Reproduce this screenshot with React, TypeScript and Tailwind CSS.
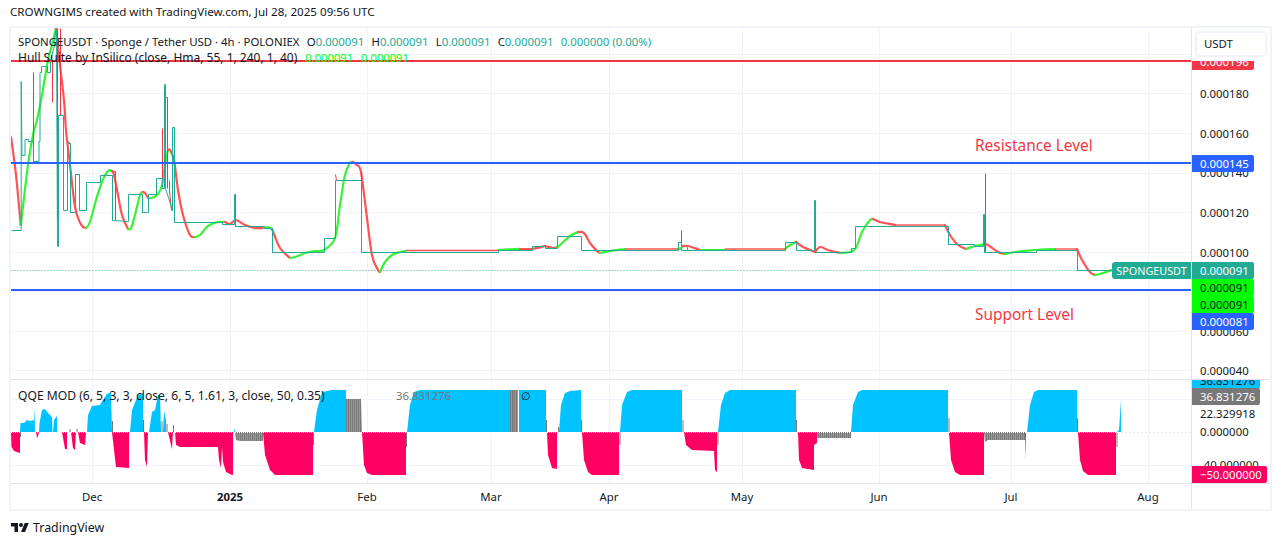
type Pt = [number, number]

const vGrid = [92, 230, 367, 491, 609, 742, 879, 1011, 1148]
const hGrid = [54, 93, 133, 173, 212, 252, 291, 331, 370]
const qGrid = [399, 465]

const TEAL = "#22ab94"
const RED = "#f23645"
const BLUE = "#2962ff"

// price steps, in page coordinates
const teal: Pt[] = [
  [11, 230], [20.7, 230], [20.7, 81], [21.5, 155], [24.5, 155], [24.5, 139], [28, 139], [28, 141], [33, 141], [33, 161],
  [38.5, 161], [38.5, 141], [39.5, 141], [39.5, 72], [41, 72], [41, 66], [47, 66], [47, 72], [50, 72], [50, 60], [54, 45], [55, 30], [56, 30],
  [57, 246], [58, 246], [58, 115], [63, 115], [63, 210], [67, 210], [67, 143], [70, 143], [70, 212], [75, 212], [75, 174], [79, 174], [79, 210],
  [86, 210], [86, 182], [100, 182], [100, 175], [112, 175], [112, 220], [128, 221], [128, 194], [142, 194], [142, 212], [148, 212],
  [148, 194], [156, 194], [156, 178], [162, 178], [162, 188], [164, 188], [164, 84], [165, 84], [165, 188], [172, 210], [172, 127], [174, 127],
  [174, 222], [222, 222], [222, 224], [234, 224], [234, 194], [235, 194], [235, 226], [264, 226], [264, 228], [272, 228], [272, 252],
  [324, 252], [324, 238], [335, 238], [335, 180], [361, 180], [361, 252], [498, 252], [498, 250], [532, 250], [532, 246], [545, 246],
  [545, 248], [557, 248], [557, 236], [581, 236], [581, 250], [678, 250], [678, 242], [681, 242], [681, 250], [687, 250], [687, 247], [687, 250],
  [785, 250], [785, 242], [796, 242], [796, 250], [814, 250], [814, 200], [815, 200], [815, 252], [851, 252], [851, 248], [855, 248], [855, 226],
  [948, 226], [948, 244], [974, 244], [974, 246], [983, 246], [983, 214], [984, 214], [984, 252], [1036, 252], [1036, 250],
  [1077, 250], [1077, 270], [1112, 270],
]

const redSteps: Pt[][] = [
  [[33, 72], [33, 161]],
  [[52, 60], [52, 102]],
  [[57, 28], [57, 220]],
  [[60, 28], [60, 115]],
  [[67, 141], [70, 143], [70, 212]],
  [[75, 212], [75, 174], [79, 174], [79, 210]],
  [[112, 171], [115, 171], [115, 220]],
  [[142, 194], [142, 212]],
  [[162, 188], [162, 128]],
  [[165, 97], [167, 97], [167, 188]],
  [[169, 180], [169, 190], [171, 210]],
  [[174, 127], [174, 222]],
  [[235, 194], [235, 226]],
  [[272, 228], [272, 252]],
  [[335, 174], [336, 180]],
  [[361, 172], [361, 252]],
  [[581, 236], [581, 250]],
  [[681, 230], [681, 250]],
  [[796, 242], [796, 250]],
  [[815, 200], [815, 252]],
  [[948, 226], [948, 244]],
  [[985, 173], [985, 252]],
  [[1077, 250], [1077, 270]],
]

const hull: { c: "g" | "r"; pts: Pt[] }[] = [
  { c: "r", pts: [[11, 137], [16, 175], [20.7, 225]] },
  { c: "g", pts: [[20.7, 225], [22, 215], [28, 165], [33, 135], [37, 120], [42, 95], [48, 60], [52, 45], [56, 28]] },
  { c: "r", pts: [[56, 28], [60, 65], [64, 100], [66, 130], [70, 165], [74, 200], [77, 215], [82, 226], [86, 228]] },
  { c: "g", pts: [[86, 228], [90, 222], [96, 200], [102, 182], [108, 171], [112, 171]] },
  { c: "r", pts: [[112, 171], [114, 175], [118, 195], [122, 215], [128, 229]] },
  { c: "g", pts: [[128, 229], [131, 228], [135, 215], [140, 195], [143, 192]] },
  { c: "r", pts: [[143, 192], [145, 193], [148, 198]] },
  { c: "g", pts: [[148, 198], [152, 198], [158, 194], [162, 185], [165, 165], [168, 150]] },
  { c: "r", pts: [[168, 150], [170, 150], [174, 160], [178, 190], [183, 215], [190, 235], [195, 237]] },
  { c: "g", pts: [[195, 237], [200, 235], [208, 226], [218, 222], [225, 222]] },
  { c: "r", pts: [[225, 222], [230, 224], [236, 220], [245, 225], [255, 228], [264, 228]] },
  { c: "g", pts: [[264, 228], [268, 227], [272, 229]] },
  { c: "r", pts: [[272, 229], [280, 248], [290, 258]] },
  { c: "g", pts: [[290, 258], [295, 257], [305, 253], [315, 251], [324, 250], [335, 238], [340, 205], [345, 175], [350, 163], [353, 162]] },
  { c: "r", pts: [[353, 162], [357, 165], [361, 172], [366, 210], [372, 255], [378, 270], [380, 272]] },
  { c: "g", pts: [[380, 272], [385, 262], [392, 255], [400, 252], [406, 251]] },
  { c: "g", pts: [[498, 250], [515, 249], [520, 249]] },
  { c: "r", pts: [[520, 249], [532, 249], [545, 246]] },
  { c: "r", pts: [[545, 246], [553, 248], [557, 247]] },
  { c: "g", pts: [[557, 247], [560, 245], [570, 236], [578, 232]] },
  { c: "r", pts: [[578, 232], [584, 233], [590, 243], [597, 251], [600, 253]] },
  { c: "g", pts: [[600, 253], [610, 251], [625, 249]] },
  { c: "g", pts: [[678, 249], [680, 249], [683, 246]] },
  { c: "r", pts: [[683, 246], [688, 246], [700, 250]] },
  { c: "g", pts: [[700, 250], [720, 250], [725, 250]] },
  { c: "g", pts: [[785, 249], [790, 245], [796, 242]] },
  { c: "r", pts: [[796, 242], [803, 247], [815, 252]] },
  { c: "r", pts: [[815, 252], [820, 247], [828, 250], [840, 253]] },
  { c: "g", pts: [[840, 253], [850, 252], [856, 248], [862, 232], [870, 220], [873, 219]] },
  { c: "r", pts: [[873, 219], [880, 222], [895, 225]] },
  { c: "r", pts: [[945, 225], [950, 235], [958, 245], [966, 249]] },
  { c: "g", pts: [[966, 249], [975, 246], [985, 244]] },
  { c: "r", pts: [[985, 244], [988, 245], [998, 252], [1005, 254]] },
  { c: "g", pts: [[1005, 254], [1015, 252], [1035, 250], [1055, 249]] },
  { c: "r", pts: [[1077, 249], [1082, 260], [1090, 272], [1095, 275]] },
  { c: "g", pts: [[1095, 275], [1100, 274], [1112, 270]] },
]

// flat stretches of the hull line, where only a thin red edge shows above the price
const hullFlat: [number, number, number][] = [
  [406, 498, 250.5], [625, 678, 249], [725, 785, 249], [895, 945, 225], [1055, 1077, 249],
]

const qBlue: Pt[][] = [
  [[20, 432], [20.5, 423], [24, 423], [27, 420], [30, 421], [34, 420], [34.5, 407], [35, 432]],
  [[39, 432], [39.5, 423], [42, 410], [45, 409], [48, 413], [52, 417], [52.5, 432]],
  [[53, 432], [54, 420], [57, 416], [57, 432]],
  [[87, 432], [88, 415], [92, 406], [100, 405], [103, 400], [107, 394], [111, 392], [112, 432]],
  [[130, 432], [132, 410], [138, 395], [143, 393], [143, 432]],
  [[149, 432], [152, 412], [155, 410], [158, 395], [160, 395], [161, 432]],
  [[163, 432], [164, 411], [166, 420], [166, 432]],
  [[234, 432], [234.5, 428], [235, 432]],
  [[314, 432], [317, 410], [322, 392], [332, 390], [346, 390], [346, 432]],
  [[407, 432], [410, 405], [414, 392], [420, 390], [510, 390], [510, 432]],
  [[519, 432], [519, 390], [527, 390], [546, 390], [546, 432]],
  [[559, 432], [561, 405], [565, 393], [570, 391], [581, 390], [581, 432]],
  [[620, 432], [622, 405], [627, 392], [632, 390], [682, 390], [682, 432]],
  [[718, 432], [721, 405], [725, 393], [730, 390], [796, 390], [796, 432]],
  [[851, 432], [853, 405], [858, 392], [862, 390], [948, 390], [948, 432]],
  [[1027, 432], [1030, 405], [1034, 392], [1038, 390], [1077, 390], [1077, 432]],
  [[1117, 432], [1119, 430], [1120, 415], [1121, 400], [1121, 432]],
]

const qPink: Pt[][] = [
  [[11, 432], [11.5, 447], [14, 451], [20, 453], [20, 432]],
  [[36, 432], [37, 438], [38, 436], [39, 432]],
  [[62, 432], [65, 449], [67, 449], [67, 432]],
  [[71, 432], [73, 448], [75, 450], [76, 432]],
  [[78, 432], [80, 443], [85, 445], [86, 432]],
  [[112, 432], [114, 450], [116, 467], [129, 468], [129, 432]],
  [[144, 432], [145, 460], [147, 467], [148, 432]],
  [[168, 432], [171, 445], [172, 449], [173, 432]],
  [[175, 432], [176, 445], [180, 447], [218, 447], [219, 460], [221, 468], [222, 447], [223, 462], [226, 472], [232, 475], [233, 475], [233, 432]],
  [[263, 432], [265, 455], [270, 470], [275, 475], [313, 475], [313, 432]],
  [[362, 432], [364, 465], [367, 473], [372, 475], [406, 475], [406, 432]],
  [[547, 432], [548, 455], [552, 468], [557, 469], [557, 432]],
  [[582, 432], [584, 460], [588, 472], [592, 475], [619, 475], [619, 432]],
  [[684, 432], [686, 445], [692, 450], [714, 451], [715, 470], [717, 472], [717, 432]],
  [[798, 432], [799, 460], [802, 468], [814, 470], [814, 445], [817, 443], [817, 432]],
  [[949, 432], [951, 460], [955, 472], [960, 475], [984, 475], [984, 432]],
  [[1025, 432], [1025.5, 460], [1026, 432]],
  [[1078, 432], [1080, 460], [1083, 471], [1088, 475], [1116, 475], [1116, 432]],
]

const qGray: Pt[][] = [
  [[235, 432], [236, 440], [240, 441], [263, 441], [263, 432]],
  [[346, 399], [361, 399], [362, 432], [346, 432]],
  [[510, 390], [518, 390], [518, 432], [510, 432]],
  [[817, 432], [817, 438], [851, 438], [851, 432]],
  [[984, 432], [985, 442], [988, 440], [1025, 440], [1025, 432]],
]

// single thin grey bars: x, top, bottom
const qTicks: [number, number, number][] = [
  [20.5, 432, 437], [70, 429, 432], [77, 429, 432], [112.5, 421, 432], [143.5, 420, 432], [162, 421, 432], [167, 424, 432],
  [173.5, 425, 432], [313.5, 432, 445], [406.5, 432, 447], [546.5, 420, 432], [558.5, 427, 432], [581.5, 420, 432], [620, 432, 445],
  [683, 420, 432], [718, 432, 445], [796.5, 420, 432], [949, 418, 432], [1077.5, 418, 432], [1117, 432, 447],
]

const toPoints = (pts: Pt[]) => pts.map((p) => p.join(",")).join(" ")

// catmull-rom through the points so the hull line stays round
function smooth(pts: Pt[]) {
  let d = `M${pts[0][0]} ${pts[0][1]}`
  for (let i = 0; i < pts.length - 1; i++) {
    const p0 = pts[i - 1] ?? pts[i]
    const p1 = pts[i]
    const p2 = pts[i + 1]
    const p3 = pts[i + 2] ?? p2
    d += ` C${p1[0] + (p2[0] - p0[0]) / 6} ${p1[1] + (p2[1] - p0[1]) / 6} ${p2[0] - (p3[0] - p1[0]) / 6} ${p2[1] - (p3[1] - p1[1]) / 6} ${p2[0]} ${p2[1]}`
  }
  return d
}

function PriceChart() {
  return (
    <svg className="block h-[351px] w-[1180px]" viewBox="11 28 1180 351">
      {/* half pixel shift keeps the 1px lines crisp */}
      <g transform="translate(0.5 0.5)">
        {vGrid.map((x) => (
          <line key={x} x1={x} x2={x} y1={28} y2={379} stroke="#f0f3fa" />
        ))}
        {hGrid.map((y) => (
          <line key={y} x1={11} x2={1191} y1={y} y2={y} stroke="#f0f3fa" />
        ))}
        <line x1={11} x2={1112} y1={270} y2={270} stroke={TEAL} strokeDasharray="1 2" />
      </g>
      {hull.map((s, i) => (
        <path
          key={i}
          d={smooth(s.pts)}
          fill="none"
          stroke={s.c === "g" ? "#38f238" : "#ff5252"}
          strokeWidth={2.2}
          strokeLinecap="round"
        />
      ))}
      {hullFlat.map(([a, b, y]) => (
        <line key={a} x1={a} x2={b} y1={y} y2={y} stroke="#ff5252" strokeWidth={1.4} />
      ))}
      <g transform="translate(0.5 0.5)">
        {redSteps.map((pts, i) => (
          <polyline key={i} points={toPoints(pts)} fill="none" stroke={RED} />
        ))}
        <polyline points={toPoints(teal)} fill="none" stroke={TEAL} />
      </g>
      <line x1={11} x2={1191} y1={61} y2={61} stroke={RED} strokeWidth={2} />
      <line x1={11} x2={1191} y1={163} y2={163} stroke={BLUE} strokeWidth={2} />
      <line x1={11} x2={1191} y1={290} y2={290} stroke={BLUE} strokeWidth={2} />
    </svg>
  )
}

function QqeChart() {
  return (
    <svg className="block h-[103px] w-[1180px]" viewBox="11 380 1180 103">
      <defs>
        <pattern id="qqe-gray" width={2} height={4} patternUnits="userSpaceOnUse">
          <rect width={1.75} height={4} fill="#787878" />
        </pattern>
      </defs>
      <g transform="translate(0.5 0.5)">
        {vGrid.map((x) => (
          <line key={x} x1={x} x2={x} y1={380} y2={483} stroke="#f0f3fa" />
        ))}
        {qGrid.map((y) => (
          <line key={y} x1={11} x2={1191} y1={y} y2={y} stroke="#f0f3fa" />
        ))}
      </g>
      <line x1={1121} x2={1191} y1={432.5} y2={432.5} stroke="#e6e8ee" strokeDasharray="2 2" />
      {qTicks.map(([x, a, b], i) => (
        <line key={i} x1={x} x2={x} y1={a} y2={b} stroke="#787878" />
      ))}
      {qGray.map((pts, i) => (
        <polygon key={i} points={toPoints(pts)} fill="url(#qqe-gray)" />
      ))}
      <rect x={513} y={390} width={1} height={42} fill="#00c3ff" />
      {qBlue.map((pts, i) => (
        <polygon key={i} points={toPoints(pts)} fill="#00c3ff" />
      ))}
      {qPink.map((pts, i) => (
        <polygon key={i} points={toPoints(pts)} fill="#ff0062" />
      ))}
      <line x1={11} x2={1121} y1={432.5} y2={432.5} stroke="#ffffff" strokeDasharray="1 1" />
    </svg>
  )
}

function PriceTag({ top, bg, text, children, w }: { top: number; bg: string; text?: string; children: string; w?: number }) {
  return (
    <div
      className="absolute left-0 flex h-[17px] items-center rounded-r-[2px] pl-2"
      style={{ top, backgroundColor: bg, color: text ?? "#ffffff", width: w ?? 62 }}
    >
      {children}
    </div>
  )
}

function AxisText({ top, children }: { top: number; children: string }) {
  return (
    <div className="absolute left-2 text-[#131722]" style={{ top }}>
      {children}
    </div>
  )
}

export default function App() {
  return (
    <div className="h-[546px] w-[1281px] overflow-hidden bg-white font-['Noto_Sans',sans-serif] text-[11.4px] leading-[17px] text-[#131722]">
      <div className="flex h-[26px] items-center pl-[10px] pb-[4px] text-[11.6px]">
        CROWNGIMS created with TradingView.com, Jul 28, 2025 09:56 UTC
      </div>

      <div className="ml-[9px] w-[1263px] border-2 border-[#f0f3fa]">
        {/* price pane */}
        <div className="flex h-[351px]">
          <div className="relative w-[1180px]">
            <PriceChart />
            <div className="absolute left-[7px] top-[6px] flex flex-col leading-[16px]">
              <div className="flex gap-[7.2px] whitespace-nowrap">
                <span>SPONGEUSDT · Sponge / Tether USD · 4h · POLONIEX</span>
                <span>O<span className="text-[#22ab94]">0.000091</span></span>
                <span>H<span className="text-[#22ab94]">0.000091</span></span>
                <span>L<span className="text-[#22ab94]">0.000091</span></span>
                <span>C<span className="text-[#22ab94]">0.000091</span></span>
                <span className="text-[#22ab94]">0.000000 (0.00%)</span>
              </div>
              <div className="flex gap-2 whitespace-nowrap">
                <span className="text-[12px]">Hull Suite by InSilico (close, Hma, 55, 1, 240, 1, 40)</span>
                <span className="text-[11.2px] text-[#00ff00]">0.000091</span>
                <span className="text-[11.2px] text-[#00ff00]">0.000091</span>
              </div>
            </div>
            <div className="absolute left-[964px] top-[107px] text-[15.4px] leading-[22px] text-[#f23645]">Resistance Level</div>
            <div className="absolute left-[964px] top-[276px] text-[15.4px] leading-[22px] text-[#f23645]">Support Level</div>
            <div className="absolute left-[1101px] top-[234px] flex h-[17px] w-[79px] items-center justify-center rounded-l-[3px] bg-[#22ab94] text-[10.8px] text-white">
              SPONGEUSDT
            </div>
          </div>
          <div className="relative flex-1 border-l border-[#e0e3eb]">
            <PriceTag top={25} bg={RED}>0.000196</PriceTag>
            <AxisText top={57}>0.000180</AxisText>
            <AxisText top={97}>0.000160</AxisText>
            <AxisText top={136}>0.000140</AxisText>
            <AxisText top={176}>0.000120</AxisText>
            <AxisText top={216}>0.000100</AxisText>
            <AxisText top={295}>0.000060</AxisText>
            <AxisText top={334}>0.000040</AxisText>
            <PriceTag top={127} bg={BLUE}>0.000145</PriceTag>
            <PriceTag top={234} bg={TEAL}>0.000091</PriceTag>
            <PriceTag top={251} bg="#00ff00" text="#131722">0.000091</PriceTag>
            <PriceTag top={268} bg="#00ff00" text="#131722">0.000091</PriceTag>
            <PriceTag top={285} bg={BLUE}>0.000081</PriceTag>
            {/* the currency box hides the top half of the red tag */}
            <div className="absolute inset-x-0 top-0 h-[33px] bg-white pl-[3px] pt-[3px]">
              <div className="flex h-[26px] w-[72px] items-center rounded-[4px] border-2 border-[#f0f3fa] bg-white pb-[1px] pl-[7px]">
                USDT
              </div>
            </div>
          </div>
        </div>

        {/* qqe pane */}
        <div className="flex h-[105px] border-y border-[#e0e3eb]">
          <div className="relative w-[1180px]">
            <QqeChart />
            <div className="absolute left-[7px] top-[7px] whitespace-nowrap text-[12.1px]">QQE MOD (6, 5, 3, 3, close, 6, 5, 1.61, 3, close, 50, 0.35)</div>
            <div className="absolute left-[385px] top-[7px] text-[#787878]">36.831276</div>
            <div className="absolute left-[510px] top-[7px]">∅</div>
          </div>
          <div className="relative flex-1 overflow-hidden border-l border-[#e0e3eb]">
            <PriceTag top={-8} bg="#00c3ff" text="#131722" w={68}>36.831276</PriceTag>
            <PriceTag top={8} bg="#787878" w={68}>36.831276</PriceTag>
            <AxisText top={25}>22.329918</AxisText>
            <AxisText top={43}>0.000000</AxisText>
            <AxisText top={76}>-40.000000</AxisText>
            <PriceTag top={86} bg="#ff0062" w={75}>−50.000000</PriceTag>
          </div>
        </div>

        {/* time axis */}
        <div className="flex h-[25px]">
          <div className="relative w-[1180px]">
            {["Dec", "2025", "Feb", "Mar", "Apr", "May", "Jun", "Jul", "Aug"].map((m, i) => (
              <div
                key={m}
                className={m === "2025" ? "absolute top-[4px] -translate-x-1/2 font-bold" : "absolute top-[4px] -translate-x-1/2"}
                style={{ left: vGrid[i] - 11 }}
              >
                {m}
              </div>
            ))}
          </div>
          <div className="flex-1 border-l border-[#e0e3eb]" />
        </div>
      </div>

      <div className="ml-[10px] mt-[8px] flex items-center gap-[3px]">
        <svg className="h-[14px] w-[20px]" viewBox="0 0 36 28" fill="#131722">
          <path d="M14 22H7V11H0V4h14v18zM28 22h-8l7.5-18h8L28 22z" />
          <circle cx="20" cy="8" r="4" />
        </svg>
        <span className="text-[12.4px] leading-[18px]">TradingView</span>
      </div>
    </div>
  )
}
